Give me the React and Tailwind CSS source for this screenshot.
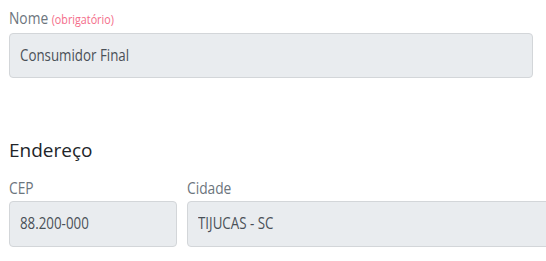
function Label({ children }) {
  return (
    <label className="mb-[1px] block whitespace-nowrap text-[16px] leading-[24px] text-[#6c757d]">
      <span className="inline-block origin-left scale-x-[0.86] align-top pt-[1px]">{children}</span>
    </label>
  );
}

function Field({ value, className = "" }) {
  return (
    <div
      className={`flex h-[45px] items-center whitespace-nowrap rounded-[4px] border border-[#d3d6d9] bg-[#e9ecef] px-[10px] text-[15.5px] text-[#495057] ${className}`}
    >
      <span className="inline-block origin-left scale-x-[0.86]">{value}</span>
    </div>
  );
}

export default function App() {
  return (
    <div
      className="min-h-screen bg-white pl-[9px] pr-[13px]"
      style={{ fontFamily: '"Open Sans", sans-serif' }}
    >
      <div className="pt-[5px]">
        <Label>
          Nome <span className="text-[12.5px] text-[#f46d8a]">(obrigatório)</span>
        </Label>
        <Field value="Consumidor Final" />
      </div>

      <h2 className="mt-[58px] text-[19px] leading-[28px] text-[#212529]">Endereço</h2>

      <div className="mr-[-40px] mt-[11px] flex gap-[10px]">
        <div className="w-[168px] shrink-0">
          <Label>CEP</Label>
          <Field value="88.200-000" className="h-[46px]" />
        </div>
        <div className="flex-1">
          <Label>Cidade</Label>
          <Field value="TIJUCAS - SC" className="h-[46px]" />
        </div>
      </div>
    </div>
  );
}
